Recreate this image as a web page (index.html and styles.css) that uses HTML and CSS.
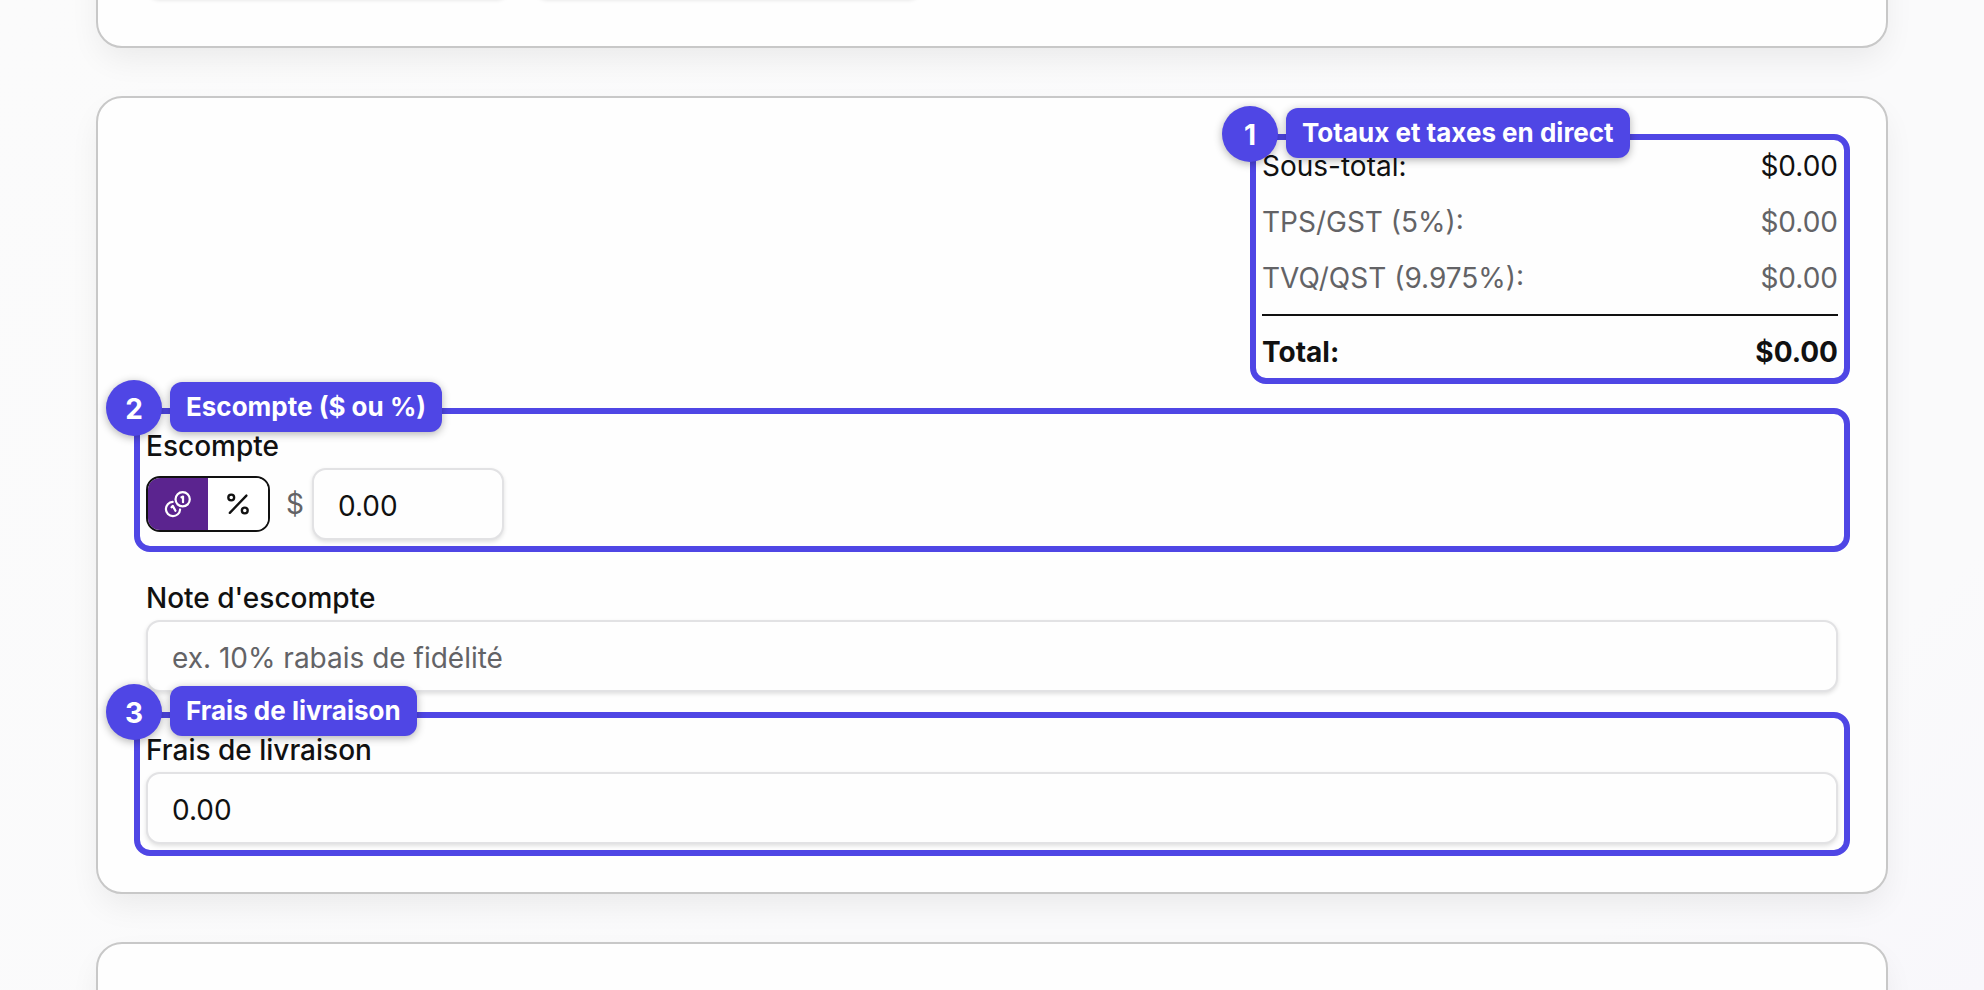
FILE: index.html
```html
<!DOCTYPE html>
<html lang="fr">
<head>
<meta charset="utf-8">
<meta name="viewport" content="width=device-width, initial-scale=1">
<title>Totaux</title>
<link rel="stylesheet" href="styles.css">
</head>
<body>
<main class="page">
  <section class="card card-previous">
    <div class="box box-first"></div>
    <div class="box box-second"></div>
  </section>

  <section class="card card-summary">
    <div class="totals step">
      <dl class="totals-list">
        <div class="row"><dt>Sous-total:</dt><dd>$0.00</dd></div>
        <div class="row muted"><dt>TPS/GST (5%):</dt><dd>$0.00</dd></div>
        <div class="row muted"><dt>TVQ/QST (9.975%):</dt><dd>$0.00</dd></div>
        <div class="row grand"><dt>Total:</dt><dd>$0.00</dd></div>
      </dl>
      <div class="frame"><span class="number">1</span><span class="tag">Totaux et taxes en direct</span></div>
    </div>

    <div class="field step">
      <label for="discount">Escompte</label>
      <div class="discount">
        <div class="toggle">
          <button type="button" class="option active" aria-label="$">
            <svg class="icon" viewBox="0 0 24 24" fill="none" stroke="currentColor" stroke-width="1.9" stroke-linecap="round" stroke-linejoin="round">
              <circle cx="16" cy="8" r="6.1"/>
              <path d="M7.4 10.2A6.1 6.1 0 1 0 13.8 16.7"/>
              <path d="M15 6.2L16.3 5.6V10.4"/>
              <path d="M6.5 14.8L7.5 13.6L9.8 17.8"/>
            </svg>
          </button>
          <button type="button" class="option" aria-label="%">
            <svg class="icon" viewBox="0 0 24 24" fill="none" stroke="currentColor" stroke-width="2" stroke-linecap="round">
              <circle cx="6.2" cy="6.4" r="2.5"/>
              <circle cx="17.8" cy="17.6" r="2.5"/>
              <path d="M5 19.6L19.2 4.8"/>
            </svg>
          </button>
        </div>
        <span class="unit">$</span>
        <input class="input amount" id="discount" type="text" inputmode="decimal" value="0.00">
      </div>
      <div class="frame"><span class="number">2</span><span class="tag">Escompte ($ ou %)</span></div>
    </div>

    <div class="field">
      <label for="note">Note d'escompte</label>
      <input class="input" id="note" type="text" placeholder="ex. 10% rabais de fidélité">
    </div>

    <div class="field step">
      <label for="shipping">Frais de livraison</label>
      <input class="input" id="shipping" type="text" inputmode="decimal" value="0.00">
      <div class="frame"><span class="number">3</span><span class="tag">Frais de livraison</span></div>
    </div>
  </section>

  <section class="card card-next"></section>
</main>
</body>
</html>
```
FILE: styles.css
```css
* {
  box-sizing: border-box;
}

body {
  margin: 0;
  overflow: hidden;
  background: linear-gradient(135deg, #fbfbfb 0%, #fafafb 60%, #fafafb 85%, #f8f7fb 100%);
  color: #111;
  font-family: Inter, sans-serif;
  font-size: 28px;
  line-height: 40px;
}

.page {
  display: flex;
  flex-direction: column;
  gap: 48px;
  height: 100vh;
  padding: 0 96px;
}

.card {
  flex: none;
  padding: 48px;
  border: 2px solid #c8c8c8;
  border-radius: 26px;
  background: #fefefe;
  box-shadow: 0 14px 32px -4px rgba(0, 0, 0, 0.07);
}

/* Scrolled mostly out of view */
.card-previous {
  display: flex;
  gap: 24px;
  margin-top: -124px;
}

.box {
  height: 72px;
  border: 2px solid #e2e2e4;
  border-radius: 14px;
  box-shadow: 0 2px 4px rgba(0, 0, 0, 0.12);
}

.box-first {
  flex: 0 0 364px;
}

.box-second {
  flex: 0 0 388px;
}

.card-summary {
  display: flex;
  flex-direction: column;
  gap: 32px;
}

.card-next {
  min-height: 160px;
}

.step {
  position: relative;
}

.totals {
  align-self: flex-end;
  width: 100%;
  max-width: 576px;
  margin-bottom: 16px;
}

.totals-list {
  display: flex;
  flex-direction: column;
  gap: 16px;
  margin: 0;
}

.row {
  display: flex;
  justify-content: space-between;
}

.row dd {
  margin: 0;
}

.muted {
  color: #636366;
}

.grand {
  padding-top: 16px;
  border-top: 2px solid #111;
  font-weight: 700;
}

.field {
  display: flex;
  flex-direction: column;
}

.field label {
  padding-top: 4px;
  font-weight: 500;
  line-height: 44px;
}

.input {
  width: 100%;
  height: 72px;
  padding: 4px 24px 0;
  border: 2px solid #e2e2e4;
  border-radius: 14px;
  background: #fefefe;
  box-shadow: 0 2px 4px rgba(0, 0, 0, 0.12);
  color: inherit;
  font: inherit;
}

.input::placeholder {
  color: #636366;
  opacity: 1;
}

.discount {
  display: flex;
  align-items: center;
}

.toggle {
  display: flex;
  overflow: hidden;
  border: 2px solid #111;
  border-radius: 14px;
}

.option {
  display: flex;
  align-items: center;
  justify-content: center;
  width: 60px;
  height: 52px;
  padding: 0;
  border: 0;
  background: #fff;
  color: #111;
}

.option.active {
  background: #5b248f;
  color: #fff;
}

.icon {
  width: 28px;
  height: 28px;
}

.unit {
  margin: 0 8px 0 16px;
  color: #636366;
}

.amount {
  width: 192px;
}

/* Numbered highlight drawn around a step */
.frame {
  position: absolute;
  inset: -12px;
  border: 6px solid #4f46e5;
  border-radius: 16px;
  pointer-events: none;
}

.number,
.tag {
  position: absolute;
  background: #4f46e5;
  box-shadow: 0 2px 8px rgba(0, 0, 0, 0.3);
  color: #fff;
  font-weight: 700;
}

.number {
  top: -34px;
  left: -34px;
  width: 56px;
  padding-top: 2px;
  border-radius: 50%;
  font-size: 28px;
  line-height: 54px;
  text-align: center;
}

.tag {
  top: -32px;
  left: 30px;
  padding: 0 16px;
  border-radius: 12px;
  font-size: 26px;
  line-height: 50px;
  white-space: nowrap;
}
```
